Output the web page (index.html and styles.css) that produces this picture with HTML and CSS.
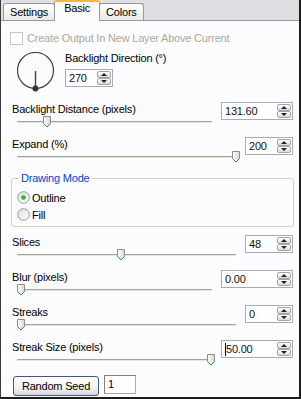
FILE: index.html
```html
<!DOCTYPE html>
<html lang="en">
<head>
    <meta charset="UTF-8">
    <title>Backlight - Basic</title>
    <link rel="stylesheet" href="styles.css">
</head>
<body>
<div class="window">
    <div class="tabs">
        <div class="tab">Settings</div>
        <div class="tab active">Basic</div>
        <div class="tab">Colors</div>
    </div>
    <div class="panel">
        <div class="check disabled"><span class="box"></span>Create Output In New Layer Above Current</div>

        <div class="direction">
            <svg class="dial" width="38" height="40" viewBox="0 0 38 40">
                <circle cx="18.5" cy="18.5" r="18" fill="none" stroke="#404040" stroke-width="1.2"/>
                <line x1="18.5" y1="19" x2="18.5" y2="36" stroke="#404040" stroke-width="1.4"/>
                <circle cx="18.5" cy="36.5" r="3" fill="#333"/>
            </svg>
            <div class="dir-ctl">
                <div class="label">Backlight Direction (°)</div>
                <div class="spin narrow"><span class="val">270</span><span class="btns"><i class="up"></i><i class="down"></i></span></div>
            </div>
        </div>

        <div class="row first">
            <div class="ctl">
                <div class="label">Backlight Distance (pixels)</div>
                <div class="track"><svg class="thumb" style="left:26px" width="8" height="12" viewBox="0 0 8 12"><path d="M.5 .5h7v7L4 11 .5 7.5z" fill="url(#tg)" stroke="#8d8d8d"/><path d="M.5 7.5L4 11l3.5-3.5" fill="none" stroke="#2c9e2c"/></svg></div>
            </div>
            <div class="spin wide"><span class="val">131.60</span><span class="btns"><i class="up"></i><i class="down"></i></span></div>
        </div>

        <div class="row">
            <div class="ctl">
                <div class="label">Expand (%)</div>
                <div class="track"><svg class="thumb" style="left:215px" width="8" height="12" viewBox="0 0 8 12"><path d="M.5 .5h7v7L4 11 .5 7.5z" fill="url(#tg)" stroke="#8d8d8d"/><path d="M.5 7.5L4 11l3.5-3.5" fill="none" stroke="#2c9e2c"/></svg></div>
            </div>
            <div class="spin narrow"><span class="val">200</span><span class="btns"><i class="up"></i><i class="down"></i></span></div>
        </div>

        <fieldset class="group">
            <legend>Drawing Mode</legend>
            <div class="radio"><svg width="13" height="13" viewBox="0 0 13 13"><circle cx="6.5" cy="6.5" r="5.8" fill="url(#rg)" stroke="#8e9aa8"/><circle cx="6.5" cy="6.5" r="2.3" fill="#2fb22f"/></svg>Outline</div>
            <div class="radio"><svg width="13" height="13" viewBox="0 0 13 13"><circle cx="6.5" cy="6.5" r="5.8" fill="url(#rg)" stroke="#8e9aa8"/></svg>Fill</div>
        </fieldset>

        <div class="row gap">
            <div class="ctl">
                <div class="label">Slices</div>
                <div class="track"><svg class="thumb" style="left:100px" width="8" height="12" viewBox="0 0 8 12"><path d="M.5 .5h7v7L4 11 .5 7.5z" fill="url(#tg)" stroke="#8d8d8d"/><path d="M.5 7.5L4 11l3.5-3.5" fill="none" stroke="#2c9e2c"/></svg></div>
            </div>
            <div class="spin narrow"><span class="val">48</span><span class="btns"><i class="up"></i><i class="down"></i></span></div>
        </div>

        <div class="row">
            <div class="ctl">
                <div class="label">Blur (pixels)</div>
                <div class="track"><svg class="thumb" style="left:0px" width="8" height="12" viewBox="0 0 8 12"><path d="M.5 .5h7v7L4 11 .5 7.5z" fill="url(#tg)" stroke="#8d8d8d"/><path d="M.5 7.5L4 11l3.5-3.5" fill="none" stroke="#2c9e2c"/></svg></div>
            </div>
            <div class="spin wide"><span class="val">0.00</span><span class="btns"><i class="up"></i><i class="down"></i></span></div>
        </div>

        <div class="row">
            <div class="ctl">
                <div class="label">Streaks</div>
                <div class="track"><svg class="thumb" style="left:0px" width="8" height="12" viewBox="0 0 8 12"><path d="M.5 .5h7v7L4 11 .5 7.5z" fill="url(#tg)" stroke="#8d8d8d"/><path d="M.5 7.5L4 11l3.5-3.5" fill="none" stroke="#2c9e2c"/></svg></div>
            </div>
            <div class="spin narrow"><span class="val">0</span><span class="btns"><i class="up"></i><i class="down"></i></span></div>
        </div>

        <div class="row">
            <div class="ctl">
                <div class="label">Streak Size (pixels)</div>
                <div class="track"><svg class="thumb" style="left:190px" width="8" height="12" viewBox="0 0 8 12"><path d="M.5 .5h7v7L4 11 .5 7.5z" fill="url(#tg)" stroke="#8d8d8d"/><path d="M.5 7.5L4 11l3.5-3.5" fill="none" stroke="#2c9e2c"/></svg></div>
            </div>
            <div class="spin wide"><span class="val"><span class="caret"></span>50.00</span><span class="btns"><i class="up"></i><i class="down"></i></span></div>
        </div>

        <div class="seed">
            <button class="btn">Random Seed</button>
            <div class="textbox">1</div>
        </div>
    </div>
</div>

<svg width="0" height="0" class="defs">
    <defs>
        <linearGradient id="tg" x1="0" y1="0" x2="1" y2="0">
            <stop offset="0" stop-color="#ffffff"/>
            <stop offset="1" stop-color="#d6d6d2"/>
        </linearGradient>
        <linearGradient id="rg" x1="0" y1="0" x2="1" y2="1">
            <stop offset="0" stop-color="#dcdcd6"/>
            <stop offset="1" stop-color="#ffffff"/>
        </linearGradient>
    </defs>
</svg>
</body>
</html>
```
FILE: styles.css
```css
body {
    margin: 0;
    font-family: "Liberation Sans", Arial, sans-serif;
    font-size: 11px;
    letter-spacing: -0.2px;
    color: #000;
    background: #fff;
}
.defs {
    position: absolute;
}
.window {
    width: 301px;
    height: 399px;
    box-sizing: border-box;
    border-left: 1px solid #3a3a3a;
    border-right: 2px solid #1c1c1c;
    border-bottom: 2px solid #1c1c1c;
    display: flex;
    flex-direction: column;
    background: #dfdfe3;
}
.tabs {
    height: 20px;
    display: flex;
    align-items: flex-end;
    padding-left: 2px;
}
.tab {
    height: 16px;
    line-height: 16px;
    padding: 0 6px;
    border: 1px solid #919b9c;
    border-bottom: none;
    border-radius: 3px 3px 0 0;
    background: linear-gradient(#ffffff, #e9e9e6);
}
.tab.active {
    height: 19px;
    line-height: 12px;
    padding: 0 9px;
    margin: 0 -1px -1px;
    border-top: 2px solid #f7b637;
    background: #fcfcfe;
    position: relative;
    z-index: 1;
}
.panel {
    flex: 1;
    background: #fcfcfe;
    border-top: 1px solid #919b9c;
}
.check {
    display: flex;
    align-items: center;
    height: 14px;
    margin: 10px 0 0 9px;
}
.check .box {
    width: 11px;
    height: 11px;
    border: 1px solid #cac8bb;
    background: #fff;
    margin-right: 4px;
}
.disabled {
    color: #aca899;
}
.direction {
    display: flex;
    height: 38px;
    margin-top: 7px;
    padding-left: 16px;
}
.dir-ctl {
    margin-left: 10px;
}
.dir-ctl .spin {
    margin-top: 4px;
}
.label {
    height: 13px;
    line-height: 13px;
    margin-top: 1px;
    white-space: nowrap;
}
.dir-ctl .label {
    margin-top: 0;
}
.row {
    display: flex;
    height: 35px;
    padding: 0 6px 0 11px;
}
.row.first {
    margin-top: 12px;
}
.row.gap {
    margin-top: 8px;
}
.ctl {
    flex: 1;
    margin-right: 9px;
}
.track {
    position: relative;
    height: 3px;
    margin: 5px 0 0 5px;
    box-sizing: border-box;
    border-top: 1px solid #a3a39c;
    background: #e4e3dc;
    border-bottom: 1px solid #fff;
    border-radius: 1px;
}
.thumb {
    position: absolute;
    top: -6px;
}
.spin {
    display: flex;
    height: 18px;
    box-sizing: border-box;
    border: 1px solid #a5acb2;
    background: #fff;
}
.spin.wide {
    width: 72px;
}
.spin.narrow {
    width: 48px;
}
.spin .val {
    flex: 1;
    padding-left: 3px;
    line-height: 16px;
    color: #111;
    display: flex;
    align-items: center;
}
.caret {
    width: 1px;
    height: 13px;
    background: #000;
}
.btns {
    display: flex;
    flex-direction: column;
    width: 14px;
    margin: 1px 1px 1px 0;
}
.btns i {
    flex: 1;
    border: 1px solid #9fa6ad;
    border-radius: 2px;
    background: linear-gradient(#ffffff, #d9d9d9);
    display: flex;
    align-items: center;
    justify-content: center;
}
.btns i + i {
    margin-top: 0;
}
.btns i::after {
    content: "";
    border-left: 3px solid transparent;
    border-right: 3px solid transparent;
}
.btns .up::after {
    border-bottom: 3px solid #222;
}
.btns .down::after {
    border-top: 3px solid #222;
}
.group {
    margin: 0 5px 0 10px;
    padding: 4px 4px 3px 5px;
    border: 1px solid #d0d0bf;
    border-radius: 3px;
}
.group legend {
    color: #0046d5;
    line-height: 13px;
    padding: 0 2px;
    margin-left: 2px;
}
.radio {
    display: flex;
    align-items: center;
    height: 17px;
}
.radio svg {
    margin-right: 2px;
}
.seed {
    display: flex;
    align-items: flex-start;
    margin: 1px 0 0 12px;
}
.btn {
    width: 86px;
    height: 20px;
    padding: 0;
    font: inherit;
    letter-spacing: inherit;
    color: #000;
    border: 1px solid #3c5a84;
    border-radius: 3px;
    background: linear-gradient(#ffffff, #f2f2f0 60%, #d8d8d4);
}
.textbox {
    width: 32px;
    height: 19px;
    box-sizing: border-box;
    margin: -1px 0 0 5px;
    padding-left: 3px;
    line-height: 17px;
    border: 1px solid #a5acb2;
    border-top-color: #7f7f7f;
    border-left-color: #7f7f7f;
    background: #fff;
}
```
